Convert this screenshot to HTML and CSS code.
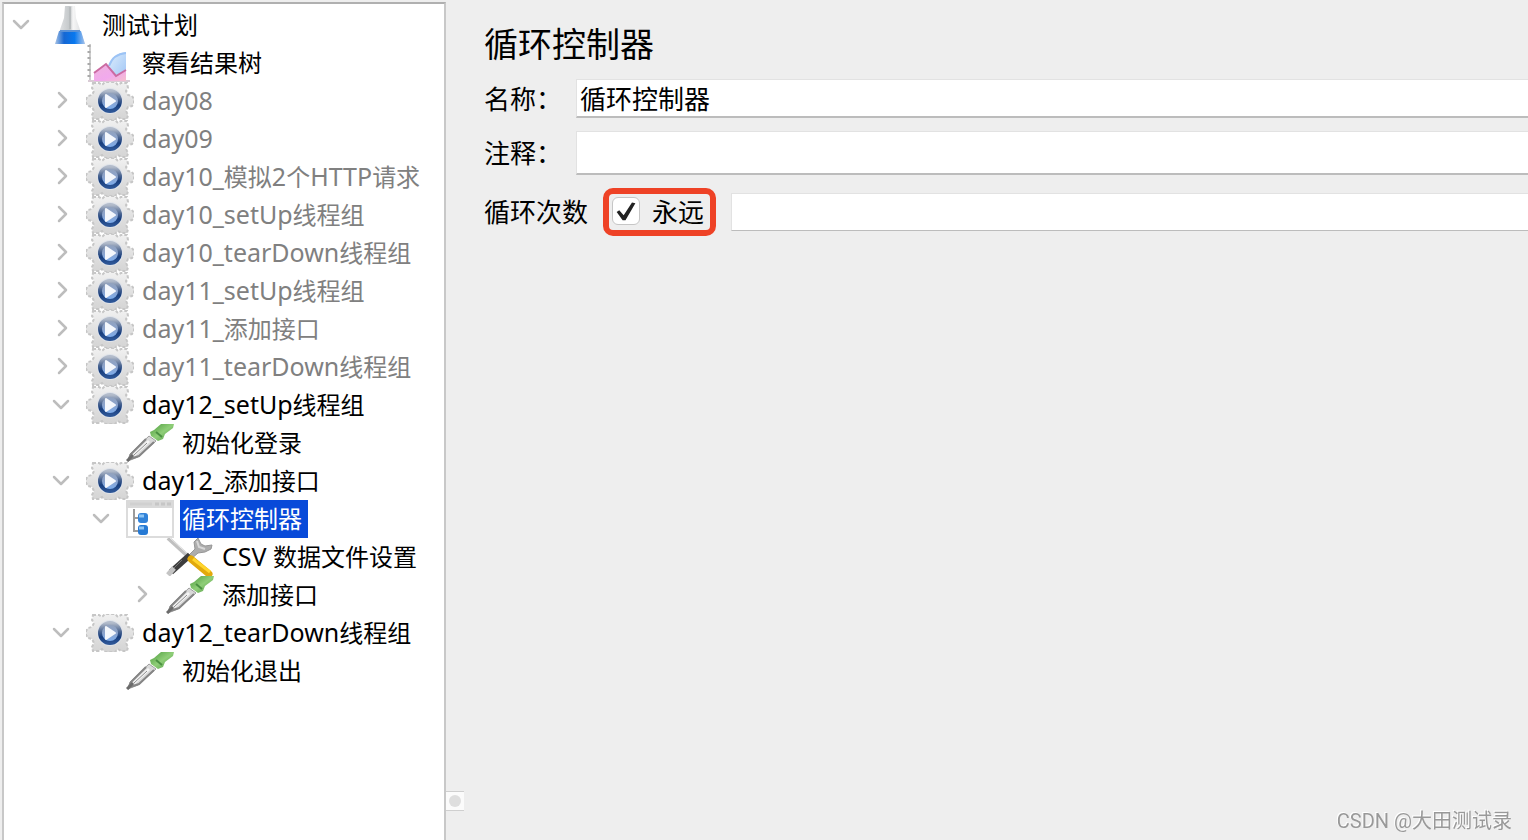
FILE: index.html
```html
<!DOCTYPE html>
<html lang="zh-CN">
<head>
    <meta charset="UTF-8">
    <meta name="viewport" content="width=device-width, initial-scale=1.0">
    <title>循环控制器</title>
    <link rel="stylesheet" href="styles.css">
</head>
<body>
    <!-- Icon sprites -->
    <svg class="sprites" aria-hidden="true">
        <defs>
            <linearGradient id="gearFill" x1="0" y1="0" x2="0" y2="1">
                <stop offset="0" stop-color="#f1f1f1"/>
                <stop offset="0.6" stop-color="#dedede"/>
                <stop offset="1" stop-color="#d4d4d4"/>
            </linearGradient>
            <linearGradient id="ringFill" x1="0" y1="0" x2="0" y2="1">
                <stop offset="0" stop-color="#b3bccb"/>
                <stop offset="0.4" stop-color="#516a94"/>
                <stop offset="0.7" stop-color="#173d7c"/>
                <stop offset="1" stop-color="#2c5596"/>
            </linearGradient>
            <linearGradient id="discFill" x1="0" y1="0" x2="0" y2="1">
                <stop offset="0" stop-color="#93a2bb"/>
                <stop offset="0.5" stop-color="#8ba3cc"/>
                <stop offset="1" stop-color="#79aef3"/>
            </linearGradient>
            <linearGradient id="glassFill" x1="0" y1="0" x2="1" y2="0">
                <stop offset="0" stop-color="#e9eaec"/>
                <stop offset="0.5" stop-color="#c3c7c9"/>
                <stop offset="0.6" stop-color="#f6f6f6"/>
                <stop offset="1" stop-color="#d3d6d9"/>
            </linearGradient>
            <linearGradient id="liquidFill" x1="0" y1="0" x2="1" y2="0">
                <stop offset="0" stop-color="#a9c4e6"/>
                <stop offset="0.3" stop-color="#1667d3"/>
                <stop offset="0.65" stop-color="#0878ef"/>
                <stop offset="1" stop-color="#a9c4ea"/>
            </linearGradient>
            <linearGradient id="areaFill" x1="0" y1="0" x2="1" y2="1">
                <stop offset="0" stop-color="#efb3dc"/>
                <stop offset="0.6" stop-color="#f1a9ed"/>
                <stop offset="1" stop-color="#f5c0cd"/>
            </linearGradient>
            <linearGradient id="skyFill" x1="0" y1="0" x2="1" y2="1">
                <stop offset="0" stop-color="#e0effc"/>
                <stop offset="1" stop-color="#9cc3f5"/>
            </linearGradient>
            <linearGradient id="bulbFill" x1="0" y1="0" x2="1" y2="1">
                <stop offset="0" stop-color="#4c9a3c"/>
                <stop offset="0.5" stop-color="#8fce78"/>
                <stop offset="1" stop-color="#4c9641"/>
            </linearGradient>
        </defs>
        <symbol id="flask" viewBox="0 0 48 38">
            <path d="M19 0H29L30 12L39 38H9L18 12Z" fill="url(#glassFill)"/>
            <path d="M13 25H35L39 38H9Z" fill="url(#liquidFill)"/>
            <path d="M14 25H34" stroke="#5a91d6" stroke-width="2"/>
            <path d="M24 1V23" stroke="#b9bdbf" stroke-width="2"/>
        </symbol>
        <symbol id="chart" viewBox="0 0 48 38">
            <path d="M4 0V37" stroke="#cccccc" stroke-width="2"/>
            <path d="M3 1V37" stroke="#aaaaaa" stroke-width="3" stroke-dasharray="2 4"/>
            <path d="M2 37H44" stroke="#d9cbd5" stroke-width="2"/>
            <path d="M22 37L24 20Q27 9 40 8V37Z" fill="url(#skyFill)"/>
            <path d="M23 22Q27 10 40 9" fill="none" stroke="#9cc3f5" stroke-width="2"/>
            <path d="M8 28L20 20L30 32L40 26V37H8Z" fill="url(#areaFill)"/>
            <path d="M8 29L20 20L30 32L40 26" fill="none" stroke="#cb6ba2" stroke-width="2"/>
        </symbol>
        <symbol id="gear" viewBox="0 0 48 38">
            <path d="M7 1H13L16 3L19 0H29L32 3L35 1H41L42 6L40 9L42 13L46 14L48 17V21L46 24L42 25L40 29L42 33L41 37H35L32 35L29 38H19L16 35L13 37H7L6 33L8 29L6 25L2 24L0 21V17L2 14L6 13L8 9L6 6Z" fill="url(#gearFill)"/>
            <path d="M7 1H13L16 3L19 0H29L32 3L35 1H41L42 6L40 9L42 13L46 14L48 17V21L46 24L42 25L40 29L42 33L41 37H35L32 35L29 38H19L16 35L13 37H7L6 33L8 29L6 25L2 24L0 21V17L2 14L6 13L8 9L6 6Z" fill="none" stroke="#c6c6c6" stroke-width="2" stroke-dasharray="3 2"/>
            <circle cx="24" cy="19" r="13" fill="#dfe3ea"/>
            <circle cx="24" cy="19" r="10" fill="url(#discFill)" stroke="url(#ringFill)" stroke-width="4"/>
            <path d="M20 13L29 19L20 25Z" fill="#f4f7fc" stroke="#f4f7fc" stroke-width="2" stroke-linejoin="round"/>
        </symbol>
        <symbol id="dropper" viewBox="0 0 48 38">
            <path d="M2 37L4 30L23 12L30 17L12 33Z" fill="#d9d9d9" stroke="#a0a0a0" stroke-width="1"/>
            <path d="M8 31L23 17" stroke="#f5f5f5" stroke-width="3"/>
            <path d="M2 37L5 30L20 15M4 35L13 32L28 18" fill="none" stroke="#858585" stroke-width="2"/>
            <path d="M1 37L7 31" stroke="#6b6b6b" stroke-width="3"/>
            <path d="M8 31L21 19" stroke="#8d8d8d" stroke-width="1"/>
            <path d="M24 8L28 6L35 0H48L47 4L39 10L37 15L32 17L25 12Z" fill="url(#bulbFill)"/>
            <path d="M30 8L36 13" stroke="#4a9041" stroke-width="2"/>
        </symbol>
        <symbol id="controller" viewBox="0 0 48 38">
            <rect x="1" y="1" width="46" height="36" fill="#ffffff" stroke="#dcdcdc" stroke-width="2"/>
            <rect x="0" y="0" width="48" height="8" fill="#d9d9d9"/>
            <path d="M4 4H26" stroke="#d0d0d0" stroke-width="3"/>
            <path d="M29 4H46" stroke="#c6c6c6" stroke-width="3" stroke-dasharray="4 2"/>
            <path d="M8 9V31H14M8 18H14" fill="none" stroke="#9b9b9b" stroke-width="2"/>
            <rect x="12" y="13" width="10" height="10" rx="3" fill="#3182d8"/>
            <rect x="12" y="25" width="10" height="10" rx="3" fill="#2579d4"/>
            <path d="M13 16H18M13 28H18" stroke="#8cc4f4" stroke-width="3"/>
        </symbol>
        <symbol id="tools" viewBox="0 0 48 38">
            <path d="M2 0L25 21" stroke="#c0c0c0" stroke-width="4"/>
            <path d="M4 0L25 19" stroke="#e8e8e8" stroke-width="1"/>
            <path d="M23 17L29 11L28 4L32 0L35 6L39 8L46 7L45 11L39 14L32 15L25 21Z" fill="#adadad" stroke="#969696" stroke-width="1"/>
            <path d="M31 3L33 9L39 11" fill="none" stroke="#d8d8d8" stroke-width="2"/>
            <path d="M24 17L5 34" stroke="#3e3e3e" stroke-width="6"/>
            <path d="M8 30L2 37" stroke="#c4c4c4" stroke-width="5"/>
            <path d="M16 22L8 30" stroke="#777777" stroke-width="1"/>
            <path d="M25 21L43 36" stroke="#e2a90c" stroke-width="7" stroke-linecap="round"/>
            <path d="M27 21L44 34" stroke="#ffd52b" stroke-width="3"/>
        </symbol>
        <symbol id="down" viewBox="0 0 24 24">
            <path d="M4 8L11 15L18 8" fill="none" stroke="#bdbdbd" stroke-width="2.5" stroke-linecap="round" stroke-linejoin="round"/>
        </symbol>
        <symbol id="right" viewBox="0 0 24 24">
            <path d="M9 4L16 11L9 18" fill="none" stroke="#bdbdbd" stroke-width="2.5" stroke-linecap="round" stroke-linejoin="round"/>
        </symbol>
    </svg>

    <nav class="sidebar">
        <ul class="tree">
            <li>
                <div class="node"><button class="toggle" aria-label="折叠"><svg><use href="#down"/></svg></button><svg class="icon"><use href="#flask"/></svg><span class="label">测试计划</span></div>
                <ul>
                    <li><div class="node"><span class="toggle"></span><svg class="icon"><use href="#chart"/></svg><span class="label">察看结果树</span></div></li>
                    <li><div class="node disabled"><button class="toggle" aria-label="展开"><svg><use href="#right"/></svg></button><svg class="icon"><use href="#gear"/></svg><span class="label"><span class="latin">day08</span></span></div></li>
                    <li><div class="node disabled"><button class="toggle" aria-label="展开"><svg><use href="#right"/></svg></button><svg class="icon"><use href="#gear"/></svg><span class="label"><span class="latin">day09</span></span></div></li>
                    <li><div class="node disabled"><button class="toggle" aria-label="展开"><svg><use href="#right"/></svg></button><svg class="icon"><use href="#gear"/></svg><span class="label"><span class="latin">day10_</span>模拟<span class="latin">2</span>个<span class="latin">HTTP</span>请求</span></div></li>
                    <li><div class="node disabled"><button class="toggle" aria-label="展开"><svg><use href="#right"/></svg></button><svg class="icon"><use href="#gear"/></svg><span class="label"><span class="latin">day10_setUp</span>线程组</span></div></li>
                    <li><div class="node disabled"><button class="toggle" aria-label="展开"><svg><use href="#right"/></svg></button><svg class="icon"><use href="#gear"/></svg><span class="label"><span class="latin">day10_tearDown</span>线程组</span></div></li>
                    <li><div class="node disabled"><button class="toggle" aria-label="展开"><svg><use href="#right"/></svg></button><svg class="icon"><use href="#gear"/></svg><span class="label"><span class="latin">day11_setUp</span>线程组</span></div></li>
                    <li><div class="node disabled"><button class="toggle" aria-label="展开"><svg><use href="#right"/></svg></button><svg class="icon"><use href="#gear"/></svg><span class="label"><span class="latin">day11_</span>添加接口</span></div></li>
                    <li><div class="node disabled"><button class="toggle" aria-label="展开"><svg><use href="#right"/></svg></button><svg class="icon"><use href="#gear"/></svg><span class="label"><span class="latin">day11_tearDown</span>线程组</span></div></li>
                    <li>
                        <div class="node"><button class="toggle" aria-label="折叠"><svg><use href="#down"/></svg></button><svg class="icon"><use href="#gear"/></svg><span class="label"><span class="latin">day12_setUp</span>线程组</span></div>
                        <ul>
                            <li><div class="node"><span class="toggle"></span><svg class="icon"><use href="#dropper"/></svg><span class="label">初始化登录</span></div></li>
                        </ul>
                    </li>
                    <li>
                        <div class="node"><button class="toggle" aria-label="折叠"><svg><use href="#down"/></svg></button><svg class="icon"><use href="#gear"/></svg><span class="label"><span class="latin">day12_</span>添加接口</span></div>
                        <ul>
                            <li>
                                <div class="node selected"><button class="toggle" aria-label="折叠"><svg><use href="#down"/></svg></button><svg class="icon"><use href="#controller"/></svg><span class="label">循环控制器</span></div>
                                <ul>
                                    <li><div class="node"><span class="toggle"></span><svg class="icon"><use href="#tools"/></svg><span class="label"><span class="latin">CSV </span>数据文件设置</span></div></li>
                                    <li><div class="node"><button class="toggle" aria-label="展开"><svg><use href="#right"/></svg></button><svg class="icon"><use href="#dropper"/></svg><span class="label">添加接口</span></div></li>
                                </ul>
                            </li>
                        </ul>
                    </li>
                    <li>
                        <div class="node"><button class="toggle" aria-label="折叠"><svg><use href="#down"/></svg></button><svg class="icon"><use href="#gear"/></svg><span class="label"><span class="latin">day12_tearDown</span>线程组</span></div>
                        <ul>
                            <li><div class="node"><span class="toggle"></span><svg class="icon"><use href="#dropper"/></svg><span class="label">初始化退出</span></div></li>
                        </ul>
                    </li>
                </ul>
            </li>
        </ul>
    </nav>

    <div class="splitter"><span class="grip"></span></div>

    <main class="panel">
        <h1>循环控制器</h1>
        <form class="fields">
            <div class="field">
                <label class="caption" for="name">名称：</label>
                <input class="text name" type="text" id="name" value="循环控制器">
            </div>
            <div class="field">
                <label class="caption" for="comment">注释：</label>
                <input class="text comment" type="text" id="comment">
            </div>
            <div class="field loop">
                <label for="loops">循环次数</label>
                <label class="forever"><input type="checkbox" checked>永远</label>
                <input class="text loops" type="text" id="loops">
            </div>
        </form>
    </main>

    <div class="watermark">CSDN @大田测试录</div>
</body>
</html>
```

FILE: styles.css
```css
* {
    box-sizing: border-box;
}
body {
    display: flex;
    height: 100vh;
    margin: 0;
    padding: 2px 0 0 2px;
    overflow: hidden;
    background-color: #eeeeee;
    color: #000000;
    font-family: "Noto Sans CJK SC", sans-serif;
}
.sprites {
    position: absolute;
    width: 0;
    height: 0;
}

/* Tree */
.sidebar {
    flex: 0 0 444px;
    overflow: hidden;
    background-color: #ffffff;
    border: 2px solid #c8c8c8;
    border-top-color: #b0b0b0;
    border-bottom: none;
}
.tree,
.tree ul {
    list-style: none;
    margin: 0;
    padding: 0;
}
.tree {
    padding: 2px 0 0 6px;
    font-size: 24px;
}
.tree ul {
    padding-left: 40px;
}
.node {
    display: flex;
    align-items: center;
    height: 38px;
    white-space: nowrap;
}
.toggle {
    flex: none;
    width: 24px;
    height: 24px;
    margin-right: 12px;
    padding: 0;
    border: none;
    background: none;
}
.toggle svg {
    display: block;
    width: 24px;
    height: 24px;
}
.icon {
    flex: none;
    width: 48px;
    height: 38px;
    margin-right: 6px;
}
.label {
    padding: 0 6px 2px 2px;
    line-height: 36px;
}
.latin {
    font-family: "Noto Sans", sans-serif;
    font-size: 25px;
    line-height: 1;
    white-space: pre;
}
.disabled .label {
    color: #808080;
}
.selected .label {
    background-color: #084ad9;
    color: #ffffff;
}

/* Divider between tree and panel */
.splitter {
    display: flex;
    flex-direction: column;
    justify-content: flex-end;
    flex: 0 0 18px;
    padding-bottom: 29px;
}
.grip {
    display: flex;
    align-items: center;
    justify-content: center;
    height: 20px;
    background-color: #fbfbfb;
    border-top: 1px solid #cfcfcf;
    border-bottom: 1px solid #cfcfcf;
}
.grip::before {
    content: "";
    width: 12px;
    height: 12px;
    border-radius: 50%;
    background-color: #dedede;
}

/* Controller form */
.panel {
    flex: 1;
    min-width: 0;
    padding: 18px 0 0 20px;
}
h1 {
    margin: 0 0 13px;
    font-size: 34px;
    font-weight: 400;
    line-height: 46px;
}
.fields {
    display: flex;
    flex-direction: column;
    gap: 13px;
    font-size: 26px;
}
.field {
    display: flex;
    align-items: center;
    line-height: 36px;
}
.field label {
    padding-bottom: 2px;
}
.caption {
    flex: 0 0 92px;
}
.text {
    flex: 1;
    min-width: 0;
    padding: 0 3px 1px;
    border: 1px solid #e2e2e2;
    border-right: none;
    border-bottom: 2px solid #bcbcbc;
    background-color: #ffffff;
    color: #000000;
    font: inherit;
    outline: none;
}
.name {
    height: 39px;
}
.comment {
    height: 44px;
}
.loops {
    height: 38px;
    border-bottom-width: 1px;
}
.loop {
    gap: 15px;
}
.field .forever {
    display: flex;
    align-items: center;
    height: 48px;
    padding: 0 6px 2px 3px;
    border: 6px solid #ee4226;
    border-radius: 10px;
}
.forever input {
    appearance: none;
    width: 28px;
    height: 28px;
    margin: 0 12px 0 0;
    border: 1px solid #c6c6c6;
    border-radius: 6px;
    background-color: #ffffff;
}
.forever input:checked::before {
    content: "";
    display: block;
    width: 26px;
    height: 26px;
    background-color: #222222;
    clip-path: polygon(14% 54%, 24% 47%, 41% 66%, 73% 17%, 86% 20%, 48% 86%, 37% 86%);
}

.watermark {
    position: fixed;
    right: 16px;
    bottom: 4px;
    color: #999999;
    font-family: Roboto, "Noto Sans CJK SC", sans-serif;
    font-size: 20px;
    line-height: 30px;
    text-shadow: -1px -1px 0 #ffffff;
}
```
